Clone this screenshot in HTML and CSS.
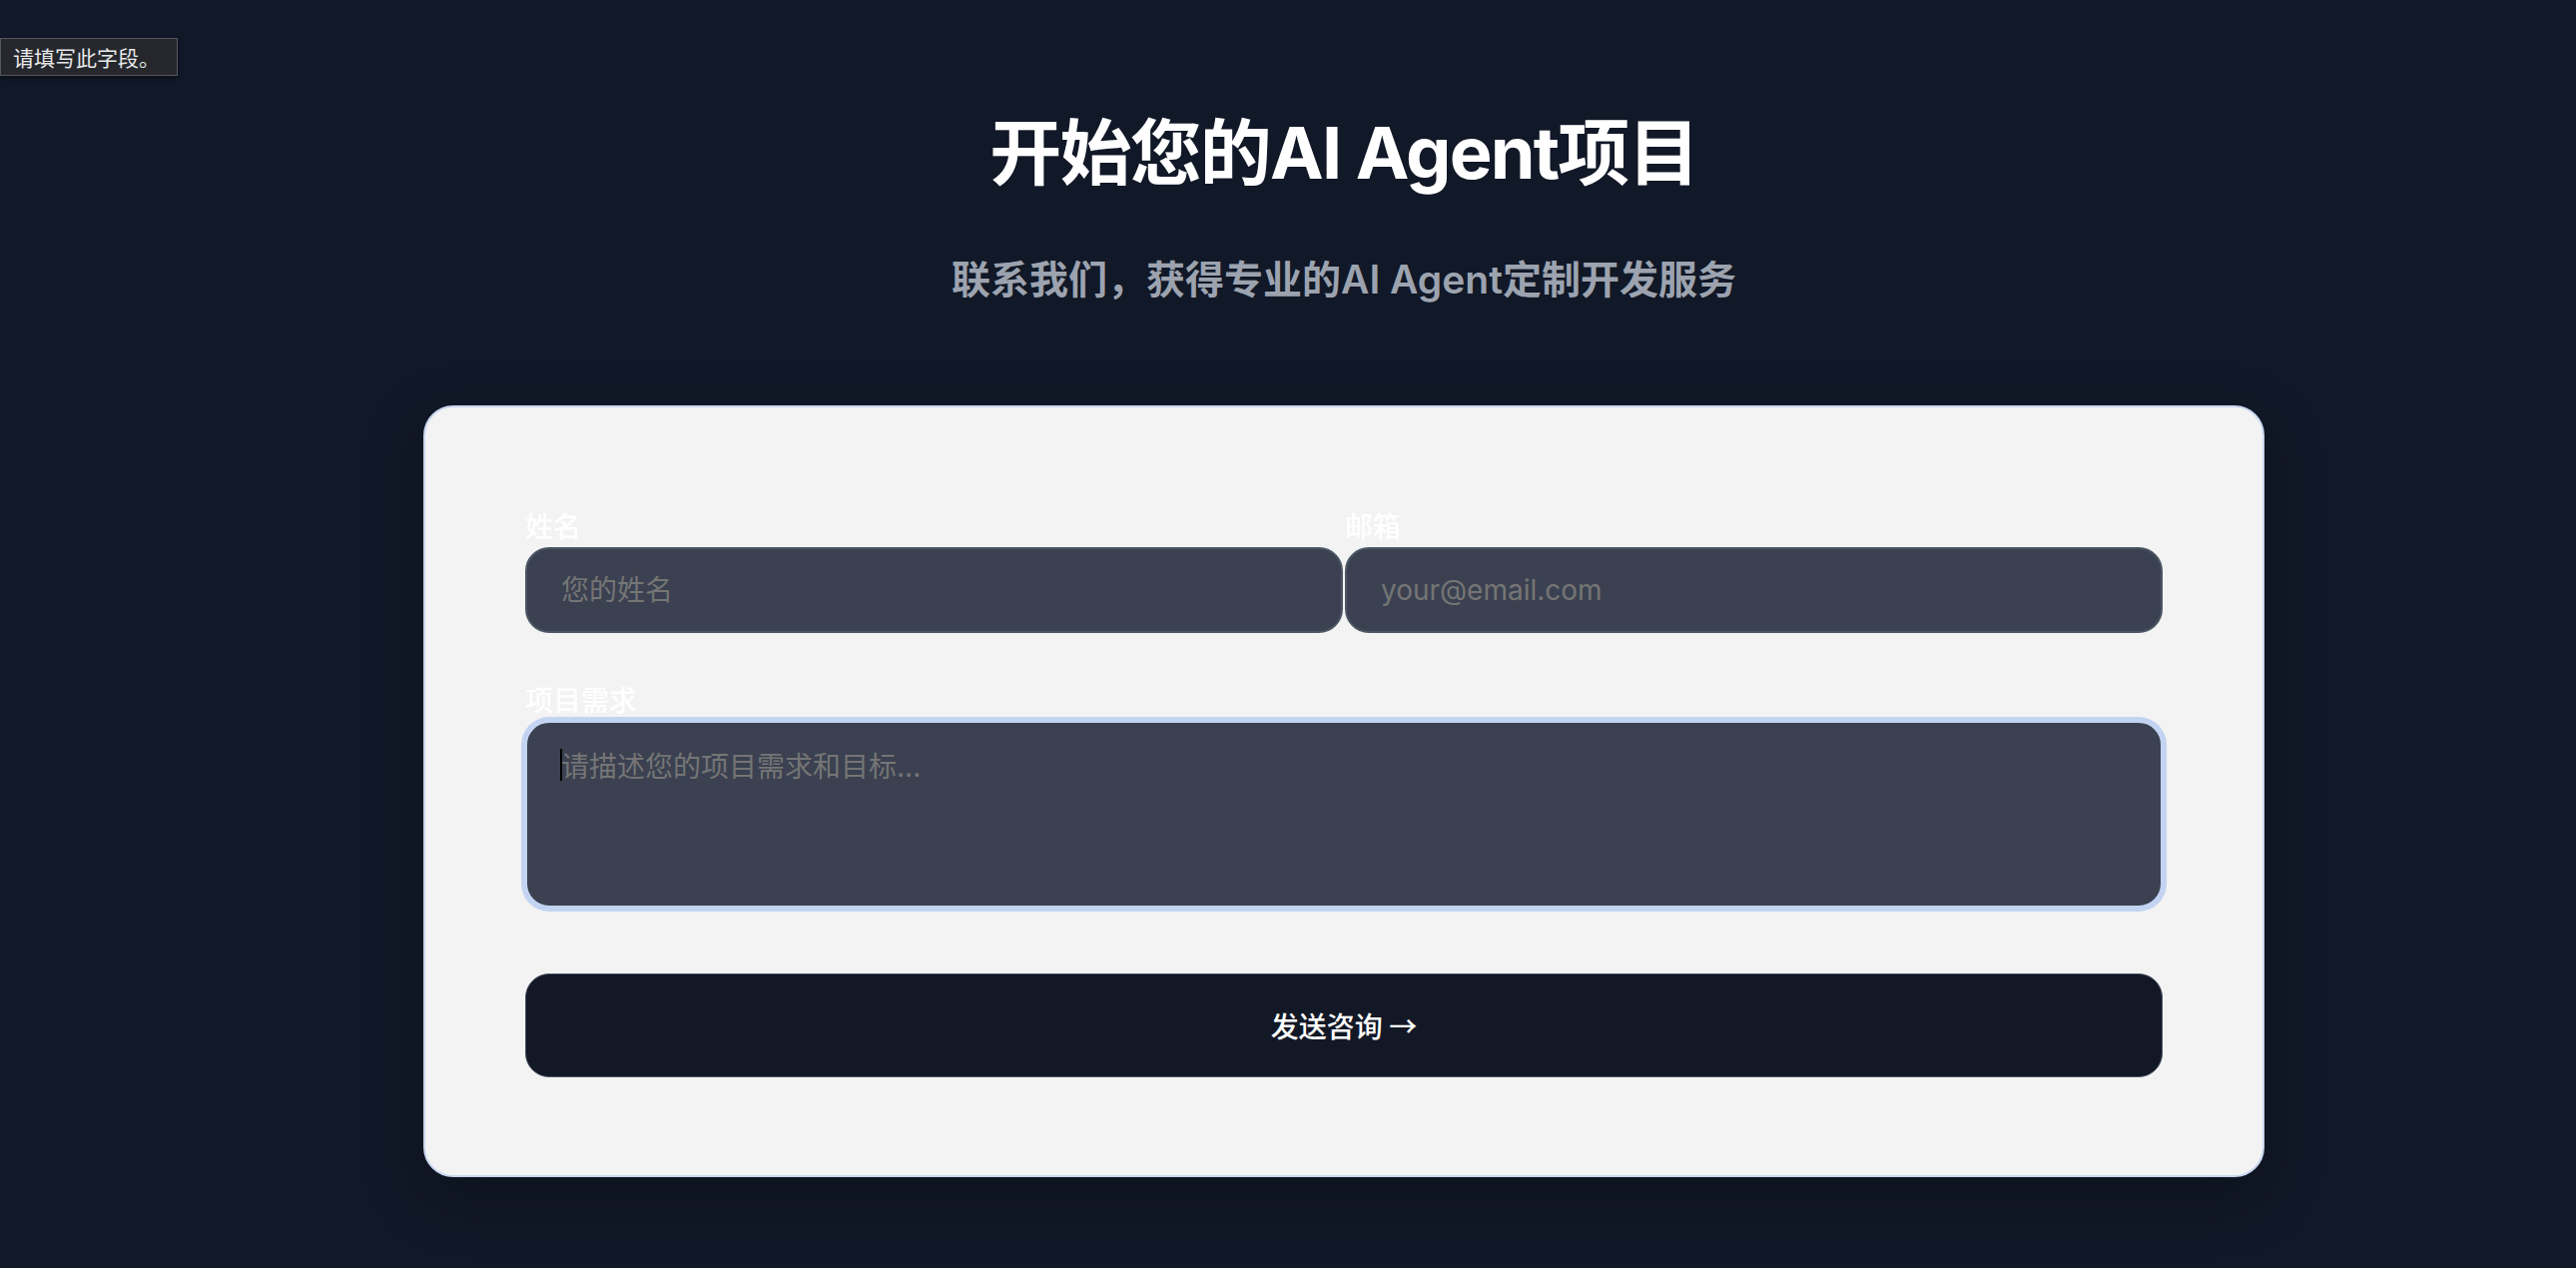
FILE: index.html
```html
<!DOCTYPE html>
<html lang="zh-CN">
<head>
<meta charset="utf-8">
<title>开始您的AI Agent项目</title>
<link rel="stylesheet" href="styles.css">
</head>
<body>
<main class="page">
  <header class="hero">
    <h1 class="hero-title">开始您的AI Agent项目</h1>
    <p class="hero-sub">联系我们，获得专业的AI Agent定制开发服务</p>
  </header>
  <form class="card">
    <div class="row-two">
      <div class="field">
        <label class="label">姓名</label>
        <input class="input" type="text" placeholder="您的姓名">
      </div>
      <div class="field">
        <label class="label">邮箱</label>
        <input class="input" type="email" placeholder="your@email.com">
      </div>
    </div>
    <div class="field field-area">
      <label class="label">项目需求</label>
      <div class="area-wrap">
        <textarea class="textarea is-focused" placeholder="请描述您的项目需求和目标..."></textarea>
        <span class="caret"></span>
      </div>
    </div>
    <button class="submit" type="button">发送咨询 →</button>
  </form>
</main>
<div class="tooltip">请填写此字段。</div>
</body>
</html>
```

FILE: styles.css
```css
html, body {
  margin: 0;
  padding: 0;
  background: #111827;
  height: 100%;
}
body {
  font-family: Inter, "Noto Sans CJK SC", sans-serif;
  color: #ffffff;
  overflow: hidden;
}
.page {
  padding-left: 112px;
  padding-top: 108px;
  display: flex;
  flex-direction: column;
  align-items: center;
}
.hero {
  display: flex;
  flex-direction: column;
  align-items: center;
}
.hero-title {
  margin: 0;
  font-size: 72px;
  line-height: 90px;
  font-weight: 700;
  letter-spacing: -0.025em;
  color: #ffffff;
}
.hero-sub {
  margin: 52px 0 0;
  font-size: 39px;
  line-height: 60px;
  font-weight: 600;
  color: #9ca3af;
}
.card {
  box-sizing: border-box;
  width: 1844px;
  margin-top: 96px;
  background: #f3f3f3;
  border: 2px solid #c9d6ef;
  border-radius: 30px;
  padding: 100px 100px 98px;
  display: flex;
  flex-direction: column;
  box-shadow: 0 20px 60px rgba(0, 0, 0, 0.25);
}
.row-two {
  display: grid;
  grid-template-columns: 1fr 1fr;
  column-gap: 2px;
}
.field {
  display: flex;
  flex-direction: column;
}
.field-area {
  margin-top: 48px;
}
.label {
  font-size: 28px;
  line-height: 40px;
  font-weight: 500;
  color: #ffffff;
}
.input, .textarea {
  box-sizing: border-box;
  width: 100%;
  background: #3b4151;
  border: 2px solid #4b5563;
  border-radius: 24px;
  font-family: Inter, "Noto Sans CJK SC", sans-serif;
  font-size: 28px;
  color: #ffffff;
  outline: none;
}
.input {
  height: 86px;
  padding: 0 34px;
}
.input::placeholder, .textarea::placeholder {
  color: #757575;
  opacity: 1;
}
.area-wrap {
  position: relative;
  display: flex;
}
.textarea {
  height: 187px;
  padding: 24px 34px;
  line-height: 40px;
  resize: none;
  display: block;
}
.textarea.is-focused {
  border-color: #c3d4f2;
  box-shadow: 0 0 0 4px #c3d4f2;
}
.caret {
  position: absolute;
  left: 35px;
  top: 28px;
  width: 2px;
  height: 32px;
  background: #000000;
}
.submit {
  margin-top: 66px;
  height: 104px;
  width: 100%;
  background: #131826;
  border: 1px solid #4b5563;
  border-radius: 24px;
  color: #ffffff;
  font-family: "Noto Sans CJK SC", sans-serif;
  font-size: 28px;
  font-weight: 500;
  cursor: pointer;
}
.tooltip {
  position: absolute;
  left: 0;
  top: 38px;
  box-sizing: border-box;
  width: 178px;
  height: 38px;
  padding: 0 12px;
  display: flex;
  align-items: center;
  background: #25272d;
  border: 1px solid #55575c;
  color: #e8e8e8;
  font-family: "Noto Sans CJK SC", sans-serif;
  font-size: 21px;
  box-shadow: 0 2px 4px rgba(0, 0, 0, 0.4);
}
```
